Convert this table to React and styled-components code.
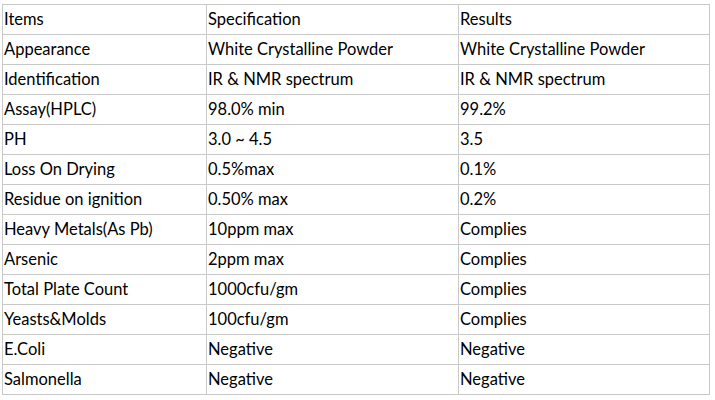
import styled, { createGlobalStyle } from 'styled-components';

const GlobalStyle = createGlobalStyle`
  body {
    margin: 0;
    background: #ffffff;
    font-family: Lato, "Open Sans", sans-serif;
  }
`

const Page = styled.div`
  padding: 4px 0 0 2px;
`

const Table = styled.table`
  border-collapse: collapse;
  table-layout: fixed;
  width: 707px;
  color: #000;
  font-family: Lato, "Open Sans", sans-serif;
  font-size: 16.5px;
`

const Col = styled.col`
  width: ${props => props.w}px;
`

const Cell = styled.td`
  height: 29px;
  padding: 0 0 1px 1px;
  box-sizing: border-box;
  border: 1px solid #c9c9c9;
  white-space: nowrap;
  vertical-align: middle;
  line-height: 28px;
`

const rows = [
  ['Items', 'Specification', 'Results'],
  ['Appearance', 'White Crystalline Powder', 'White Crystalline Powder'],
  ['Identification', 'IR & NMR spectrum', 'IR & NMR spectrum'],
  ['Assay(HPLC)', '98.0% min', '99.2%'],
  ['PH', '3.0 ~ 4.5', '3.5'],
  ['Loss On Drying', '0.5%max', '0.1%'],
  ['Residue on ignition', '0.50% max', '0.2%'],
  ['Heavy Metals(As Pb)', '10ppm max', 'Complies'],
  ['Arsenic', '2ppm max', 'Complies'],
  ['Total Plate Count', '1000cfu/gm', 'Complies'],
  ['Yeasts&Molds', '100cfu/gm', 'Complies'],
  ['E.Coli', 'Negative', 'Negative'],
  ['Salmonella', 'Negative', 'Negative'],
]

function App() {
  return (
    <Page>
      <GlobalStyle />
      <Table>
        <colgroup>
          <Col w={204} />
          <Col w={252} />
          <Col w={251} />
        </colgroup>
        <tbody>
          {rows.map((r, i) => (
            <tr key={i}>
              {r.map((c, j) => <Cell key={j}>{c}</Cell>)}
            </tr>
          ))}
        </tbody>
      </Table>
    </Page>
  )
}

export default App
